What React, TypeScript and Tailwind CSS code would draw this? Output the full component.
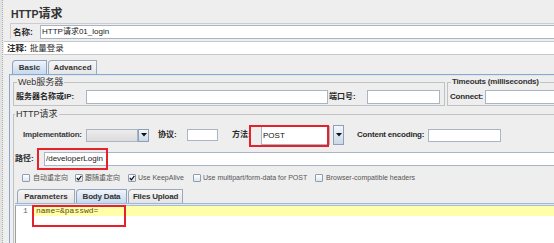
import React from "react";

function Arrow({ h }: { h: string }) {
  return (
    <div className={`w-[11px] ${h} shrink-0 border border-[#8fa0b6] bg-linear-to-b from-[#f3f7fc] to-[#c9d8ea] flex items-center justify-center`}>
      <svg width="6" height="4" viewBox="0 0 6 4">
        <path d="M0 0 L6 0 L3 3.5 Z" fill="#111" />
      </svg>
    </div>
  );
}

function Check({ checked }: { checked?: boolean }) {
  return (
    <div className="w-[8px] h-[8px] shrink-0 border border-[#8e9db0] rounded-[1px] bg-linear-to-b from-white to-[#dde6f0] flex items-center justify-center">
      {checked && (
        <svg width="6" height="6" viewBox="0 0 6 6">
          <path d="M0.8 3 L2.4 4.8 L5.4 0.8" stroke="#111" strokeWidth="1.2" fill="none" />
        </svg>
      )}
    </div>
  );
}

export default function App() {
  return (
    <div className="relative w-[554px] h-[243px] overflow-hidden bg-[#eeeeee] flex font-['Liberation_Sans','Noto_Sans_CJK_SC',sans-serif] text-[#2a2a2a]">
      {/* left splitter */}
      <div className="w-[4px] shrink-0 flex">
        <div className="w-[2px] bg-[#e2e2e2]" />
        <div className="w-[1px] border-l border-dotted border-[#a8a8a8]" />
      </div>

      <div className="flex-1 min-w-0 flex flex-col">
        {/* title */}
        <div className="h-[23px] shrink-0 pl-[7px] pt-[6px] leading-[13px] font-bold text-[#333]">
          <span className="text-[10.5px]">HTTP</span>
          <span className="text-[12px]">请求</span>
        </div>

        {/* name row */}
        <div className="h-[16px] shrink-0 ml-[6px] border-t border-l border-[#cdcdcd] flex items-center">
          <div className="w-[29px] pl-[2px] text-[8.5px] font-bold leading-[12px]">名称:</div>
          <div className="flex-1 h-[14px] bg-white border border-r-0 border-[#a9b5c5] text-[8px] leading-[12px] pl-[1px] text-[#222]">
            HTTP请求01_login
          </div>
        </div>

        {/* comment row */}
        <div className="mt-[2px] h-[14px] shrink-0 bg-white border-y border-[#c8c8c8] pl-[3px] flex items-center text-[8.5px] leading-[12px]">
          <span className="font-bold">注释:</span>
          <span className="ml-[3px]">批量登录</span>
        </div>

        {/* tabs */}
        <div className="mt-[5px] h-[14px] shrink-0 flex pl-[8px]">
          <div className="w-[35px] h-[14px] border border-b-0 border-[#8fa3bd] rounded-tl-[4px] bg-linear-to-b from-[#eef4fb] to-[#c6d9ee] text-[8px] font-bold flex items-center justify-center text-[#333]">
            Basic
          </div>
          <div className="ml-[1px] w-[49px] h-[14px] border border-b-0 border-[#9aa9bb] rounded-tl-[4px] bg-linear-to-b from-[#f6f6f6] to-[#e6e6e6] text-[8px] font-bold flex items-center justify-center text-[#333]">
            Advanced
          </div>
        </div>

        {/* panel */}
        <div className="flex-1 ml-[5px] border-t border-l border-[#8ba7cc] flex flex-col">
          <div className="h-[1px] bg-[#dbe6f3] shrink-0" />
          <div className="pl-[3px] flex flex-col flex-1">
            {/* fieldsets row */}
            <div className="flex shrink-0">
              <fieldset className="w-[432px] border border-[#c2c2c2] pb-[1px]">
                <legend className="ml-[3px] px-[1px] text-[9px] leading-[12px] text-[#333]">Web服务器</legend>
                <div className="mt-[2px] h-[14px] flex items-center">
                  <div className="w-[72px] pl-[2px] text-[8px] font-bold leading-[12px]">服务器名称或IP:</div>
                  <div className="w-[242px] h-[14px] bg-white border border-[#a9b5c5]" />
                  <div className="w-[39px] pl-[1px] text-[8px] font-bold leading-[12px]">端口号:</div>
                  <div className="w-[73px] h-[14px] bg-white border border-[#a9b5c5]" />
                </div>
              </fieldset>
              <fieldset className="ml-[2px] flex-1 border border-r-0 border-[#c2c2c2] pb-[1px]">
                <legend className="ml-[3px] px-[1px] text-[8px] font-bold leading-[12px] tracking-[-0.2px] text-[#333]">
                  Timeouts (milliseconds)
                </legend>
                <div className="mt-[2px] h-[14px] flex items-center">
                  <div className="w-[37px] pl-[2px] text-[8px] font-bold leading-[12px] tracking-[-0.2px]">Connect:</div>
                  <div className="flex-1 h-[14px] bg-white border border-r-0 border-[#a9b5c5]" />
                </div>
              </fieldset>
            </div>

            {/* HTTP request fieldset */}
            <fieldset className="mt-[2px] flex-1 border-t border-l border-[#c2c2c2] flex flex-col">
              <legend className="ml-[1px] px-[1px] text-[9px] leading-[12px] text-[#333]">HTTP请求</legend>

              <div className="mt-[4px] h-[22px] flex items-center shrink-0">
                <div className="w-[72px] pl-[9px] text-[8px] font-bold leading-[12px] tracking-[-0.2px] text-[#3a3a3a]">Implementation:</div>
                <div className="w-[52px] h-[13px] bg-linear-to-b from-[#ececec] to-[#dcdcdc] border border-[#a9b5c5]" />
                <Arrow h="h-[13px]" />
                <div className="ml-[9px] w-[29px] text-[8px] font-bold leading-[12px]">协议:</div>
                <div className="w-[31px] h-[12px] bg-white border border-[#a9b5c5]" />
                <div className="ml-[14px] w-[29px] text-[8px] font-bold leading-[12px]">方法:</div>
                <div className="w-[69px] h-[19px] bg-white border border-[#a9b5c5] text-[8px] leading-[17px] pl-[1px] text-[#111]">POST</div>
                <div className="ml-[3px]">
                  <Arrow h="h-[20px]" />
                </div>
                <div className="ml-[13px] w-[71px] text-[8px] font-bold leading-[12px] tracking-[-0.2px]">Content encoding:</div>
                <div className="w-[73px] h-[13px] bg-white border border-[#a9b5c5]" />
              </div>

              <div className="mt-[6px] h-[14px] flex items-center shrink-0">
                <div className="w-[30px] pl-[1px] text-[8px] font-bold leading-[12px]">路径:</div>
                <div className="flex-1 h-[14px] bg-white border border-r-0 border-[#a9b5c5] text-[8px] leading-[12px] pl-[1px] text-[#222]">
                  /developerLogin
                </div>
              </div>

              <div className="mt-[7px] h-[9px] flex items-center shrink-0 pl-[8px] text-[7px] leading-[9px] text-[#555]">
                <div className="w-[53px] flex items-center"><Check /><span className="ml-[3px]">自动重定向</span></div>
                <div className="w-[53px] flex items-center"><Check checked /><span className="ml-[2px]">跟随重定向</span></div>
                <div className="w-[65px] flex items-center"><Check checked /><span className="ml-[2px]">Use KeepAlive</span></div>
                <div className="w-[122px] flex items-center"><Check /><span className="ml-[2px]">Use multipart/form-data for POST</span></div>
                <div className="flex items-center"><Check /><span className="ml-[3px]">Browser-compatible headers</span></div>
              </div>

              <div className="mt-[7px] h-[14px] flex shrink-0 pl-[3px]">
                <div className="w-[58px] h-[14px] border border-b-0 border-[#9aa9bb] rounded-tl-[4px] bg-linear-to-b from-[#f6f6f6] to-[#e4e4e4] text-[8px] font-bold flex items-center justify-center text-[#333]">
                  Parameters
                </div>
                <div className="ml-[1px] w-[51px] h-[14px] border border-b-0 border-[#8fa3bd] rounded-tl-[4px] bg-linear-to-b from-[#eef4fb] to-[#c6d9ee] text-[8px] font-bold flex items-center justify-center tracking-[-0.2px] text-[#333]">
                  Body Data
                </div>
                <div className="ml-[1px] w-[55px] h-[14px] border border-b-0 border-[#9aa9bb] rounded-tl-[4px] bg-linear-to-b from-[#f6f6f6] to-[#e4e4e4] text-[8px] font-bold flex items-center justify-center tracking-[-0.2px] text-[#333]">
                  Files Upload
                </div>
              </div>
              <div className="ml-[1px] h-[3px] shrink-0 border-t border-[#9fb6d4] bg-[#dfe8f4] border-b border-b-[#a8bcd6]" />

              <div className="ml-[1px] flex-1 flex bg-white border-l border-[#a0a0a0]">
                <div className="w-[17px] shrink-0 text-[8px] leading-[10px] text-[#666] pl-[7px] font-['Liberation_Mono',monospace]">1</div>
                <div className="flex-1">
                  <div className="h-[10px] bg-[#ffffaa] pl-[3px] text-[8px] leading-[10px] text-[#5e4b10] font-['Liberation_Mono',monospace]">
                    name=&amp;passwd=
                  </div>
                </div>
              </div>
            </fieldset>
          </div>
        </div>
      </div>

      {/* red annotation boxes */}
      <div className="absolute left-[249px] top-[125px] w-[80px] h-[22px] border-2 border-[#e5222b]" />
      <div className="absolute left-[37px] top-[148px] w-[71px] h-[22px] border-2 border-[#e5222b]" />
      <div className="absolute left-[32px] top-[205px] w-[94px] h-[22px] border-2 border-[#e5222b]" />
    </div>
  );
}
